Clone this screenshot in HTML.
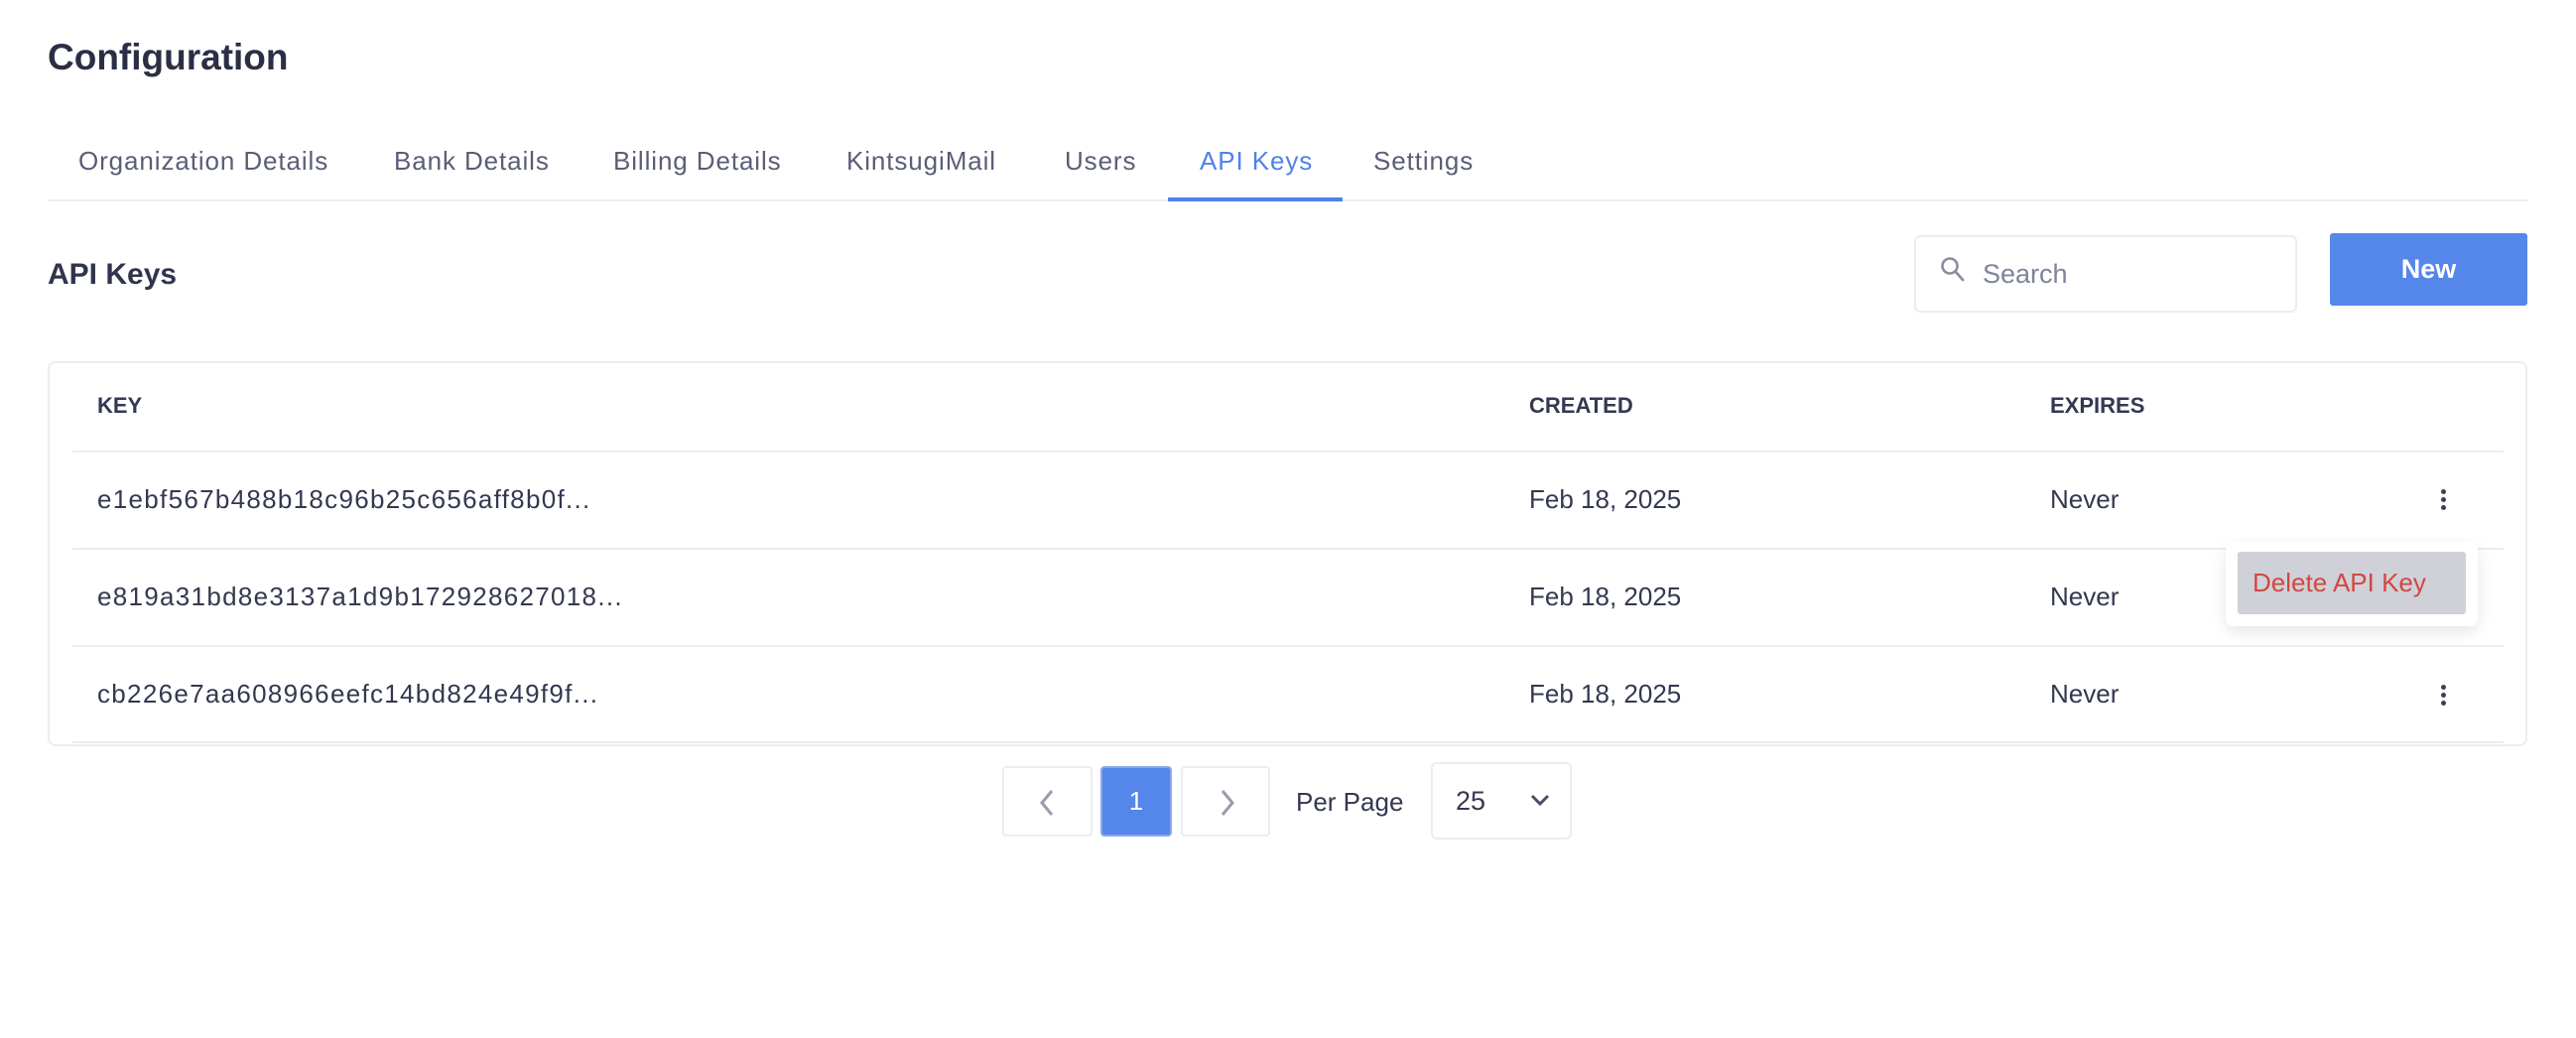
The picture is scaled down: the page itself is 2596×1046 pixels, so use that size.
<!DOCTYPE html>
<html><head><style>
*{margin:0;padding:0;box-sizing:border-box}
body{width:2596px;height:1046px;background:#fff;font-family:"Liberation Sans",sans-serif;color:#30344c;position:relative;overflow:hidden}
.a{position:absolute;white-space:nowrap}
.tab{position:absolute;top:146px;font-size:26px;color:#5a5e76;line-height:32px;letter-spacing:0.9px;white-space:nowrap}
.th{position:absolute;top:396px;font-size:22px;font-weight:bold;color:#343850;line-height:26px}
.td{position:absolute;font-size:26px;color:#343850;line-height:30px;white-space:nowrap}
.k{letter-spacing:1.3px}
.line{position:absolute;left:73px;width:2450px;height:2px;background:#ececf1}
.keb{position:absolute;left:2458px;width:8px}
.keb i{display:block;width:5px;height:5px;border-radius:50%;background:#3c4058;margin:0 auto 3px}
.pg{position:absolute;top:772px;height:71px;border:2px solid #ececf1;border-radius:4px;background:#fff}
</style></head><body>
<div class="a" style="left:48px;top:36px;font-size:37px;font-weight:bold;color:#2b2f45;line-height:44px">Configuration</div>

<div class="tab" style="left:79px">Organization Details</div>
<div class="tab" style="left:397px">Bank Details</div>
<div class="tab" style="left:618px">Billing Details</div>
<div class="tab" style="left:853px">KintsugiMail</div>
<div class="tab" style="left:1073px">Users</div>
<div class="tab" style="left:1209px;color:#4f82ea">API Keys</div>
<div class="tab" style="left:1384px">Settings</div>
<div class="a" style="left:48px;top:201px;width:2499px;height:2px;background:#ececf1"></div>
<div class="a" style="left:1177px;top:199px;width:176px;height:4px;background:#4f82ea"></div>

<div class="a" style="left:48px;top:259px;font-size:30px;font-weight:bold;color:#30344c;line-height:36px">API Keys</div>

<div class="a" style="left:1929px;top:237px;width:386px;height:78px;border:2px solid #ececf1;border-radius:6px"></div>
<svg class="a" style="left:1955px;top:257px" width="26" height="30" viewBox="0 0 26 30"><circle cx="10" cy="11" r="7.5" fill="none" stroke="#8a8ea0" stroke-width="2.6"/><path d="M15.5 16.5 L23 25" stroke="#8a8ea0" stroke-width="2.8" stroke-linecap="round"/></svg>
<div class="a" style="left:1998px;top:260px;font-size:27px;color:#80849a;line-height:32px">Search</div>

<div class="a" style="left:2348px;top:235px;width:199px;height:73px;background:#5586ea;border-radius:3px;color:#fff;font-size:27px;font-weight:bold;text-align:center;line-height:73px">New</div>

<div class="a" style="left:48px;top:364px;width:2499px;height:388px;border:2px solid #ececf1;border-radius:8px"></div>
<div class="th" style="left:98px">KEY</div>
<div class="th" style="left:1541px">CREATED</div>
<div class="th" style="left:2066px">EXPIRES</div>
<div class="line" style="top:454px"></div>
<div class="line" style="top:552px"></div>
<div class="line" style="top:650px"></div>
<div class="line" style="top:747px"></div>

<div class="td k" style="left:98px;top:488px">e1ebf567b488b18c96b25c656aff8b0f...</div>
<div class="td" style="left:1541px;top:488px">Feb 18, 2025</div>
<div class="td" style="left:2066px;top:488px">Never</div>
<div class="keb" style="top:493px"><i></i><i></i><i></i></div>

<div class="td k" style="left:98px;top:586px">e819a31bd8e3137a1d9b172928627018...</div>
<div class="td" style="left:1541px;top:586px">Feb 18, 2025</div>
<div class="td" style="left:2066px;top:586px">Never</div>

<div class="td k" style="left:98px;top:684px">cb226e7aa608966eefc14bd824e49f9f...</div>
<div class="td" style="left:1541px;top:684px">Feb 18, 2025</div>
<div class="td" style="left:2066px;top:684px">Never</div>
<div class="keb" style="top:690px"><i></i><i></i><i></i></div>

<div class="a" style="left:2243px;top:546px;width:254px;height:85px;background:#fff;border-radius:8px;box-shadow:0 6px 16px rgba(0,0,0,0.10)"></div>
<div class="a" style="left:2255px;top:556px;width:230px;height:63px;background:#cfd0d8;border-radius:3px;color:#d04840;font-size:26px;line-height:63px;padding-left:15px">Delete API Key</div>

<div class="pg" style="left:1010px;width:91px"><svg style="position:absolute;left:33px;top:20px" width="20" height="30" viewBox="0 0 20 30"><path d="M15 3 L5 15 L15 27" fill="none" stroke="#9a9cac" stroke-width="3"/></svg></div>
<div class="pg" style="left:1109px;width:72px;background:#5586ea;border-color:#8aa8ea;color:#fff;font-size:26px;text-align:center;line-height:67px">1</div>
<div class="pg" style="left:1190px;width:90px"><svg style="position:absolute;left:35px;top:20px" width="20" height="30" viewBox="0 0 20 30"><path d="M5 3 L15 15 L5 27" fill="none" stroke="#9a9cac" stroke-width="3"/></svg></div>
<div class="a" style="left:1306px;top:793px;font-size:26px;color:#343850;line-height:30px">Per Page</div>
<div class="a" style="left:1442px;top:768px;width:142px;height:78px;border:2px solid #ececf1;border-radius:6px"></div>
<div class="a" style="left:1467px;top:792px;font-size:27px;color:#343850;line-height:30px">25</div>
<svg class="a" style="left:1541px;top:799px" width="22" height="14" viewBox="0 0 22 14"><path d="M3 3 L11 11 L19 3" fill="none" stroke="#4a4e64" stroke-width="3"/></svg>
</body></html>
